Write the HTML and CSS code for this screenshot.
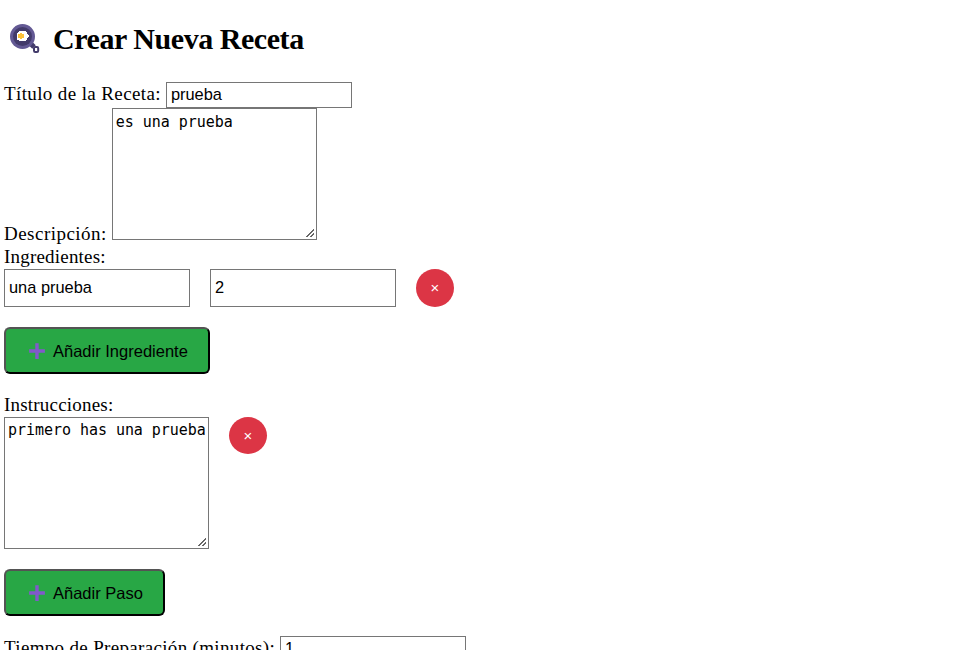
FILE: index.html
```html
<!DOCTYPE html>
<html lang="es">
<head>
<meta charset="utf-8">
<title>Crear Nueva Receta</title>
<link rel="stylesheet" href="styles.css">
</head>
<body>
<h1><svg class="pan" viewBox="9 22 34 34"><path d="M29.500 42.500l4.500 4.500" stroke="#433b6b" stroke-width="5"/><rect x="34" y="47" width="4.200" height="5" rx="1.200" fill="#fff" stroke="#433b6b" stroke-width="2"/><circle cx="22.500" cy="36.500" r="12.500" fill="#635994"/><circle cx="22.500" cy="36.500" r="9.500" fill="#433b6b"/><path d="M19 31H26V32H27V34H28V35H29V37H28V38H27V40H26V41H19V40H17V33H18V32H19Z" fill="#fff"/><path d="M20 33H22V34H24V38H22V39H20V38H18V34H20Z" fill="#fdc23b"/></svg><span>Crear Nueva Receta</span></h1>
<form>
<div class="field"><label for="titulo" class="wide">Título de la Receta:</label><input id="titulo" value="prueba"></div>
<div class="field description"><label for="desc">Descripción:</label><textarea id="desc">es una prueba</textarea></div>
<label class="heading">Ingredientes:</label>
<div class="row"><input value="una prueba"><input value="2"><button type="button" class="remove">×</button></div>
<button type="button" class="add"><svg viewBox="0 0 16 16"><path d="M8 1v14M1 8h14"/></svg><span>Añadir Ingrediente</span></button>
<label class="heading">Instrucciones:</label>
<div class="row"><textarea>primero has una prueba</textarea><button type="button" class="remove short">×</button></div>
<button type="button" class="add"><svg viewBox="0 0 16 16"><path d="M8 1v14M1 8h14"/></svg><span>Añadir Paso</span></button>
<div class="field"><label for="tiempo" class="wide time">Tiempo de Preparación (minutos):</label><input id="tiempo" value="1"></div>
</form>
</body>
</html>
```
FILE: styles.css
```css
* { box-sizing: border-box; }
html { overflow: hidden; }
body { margin: 0; padding: 22px 4px 0; font: 19px/22px "Liberation Serif", serif; color: #000; background: #fff; }
h1 { display: flex; align-items: center; gap: 10px; height: 34px; margin: 0 0 26px; padding-left: 5px; font-size: 30px; letter-spacing: -0.450px; }
.pan { width: 34px; height: 34px; }
form { display: flex; flex-direction: column; align-items: flex-start; }
.field { display: flex; align-items: center; gap: 5px; height: 26px; }
.wide { letter-spacing: 0.380px; margin-top: -2px; }
.time { letter-spacing: 0.330px; }
.description { height: 132px; align-items: flex-end; margin-bottom: 6px; }
.description label { margin-bottom: -5px; letter-spacing: 0.480px; }
input, textarea { margin: 0; border: 1px solid #767676; background: #fff; color: #000; }
input { width: 186px; height: 26px; padding: 0 4px 1px; font: 16.400px "Liberation Sans", sans-serif; }
textarea { width: 205px; height: 132px; padding: 4px 0 2px 3px; font: 15px/19px "DejaVu Sans Mono", monospace; letter-spacing: -0.040px; resize: both; overflow: auto; }
.row textarea { padding-top: 3px; }
textarea::-webkit-resizer { background: linear-gradient(135deg, transparent 46%, #666 46%, #666 60%, transparent 60%, transparent 72%, #666 72%, #666 86%, transparent 86%) 5px 5px / 8px 8px no-repeat; }
.heading { height: 23px; letter-spacing: 0.200px; }
.row { display: flex; align-items: flex-start; gap: 20px; margin-bottom: 20px; }
.row input { height: 38px; padding-bottom: 2px; }
.remove { width: 38px; height: 38px; padding: 0 0 2px; border: 0; border-radius: 50%; background: #dc3545; color: #fff; font: 15px "Liberation Sans", sans-serif; }
.short { height: 37px; padding-bottom: 0; }
.add { display: flex; align-items: center; gap: 7px; height: 47px; margin: 0 0 20px; padding: 1px 20px 0 22px; border: 2px outset #000; border-radius: 6px; background: #28a745; color: #000; font: 16.500px "Liberation Sans", sans-serif; }
.add svg { width: 18px; height: 18px; fill: none; stroke: #8159cb; stroke-width: 3; }
```
